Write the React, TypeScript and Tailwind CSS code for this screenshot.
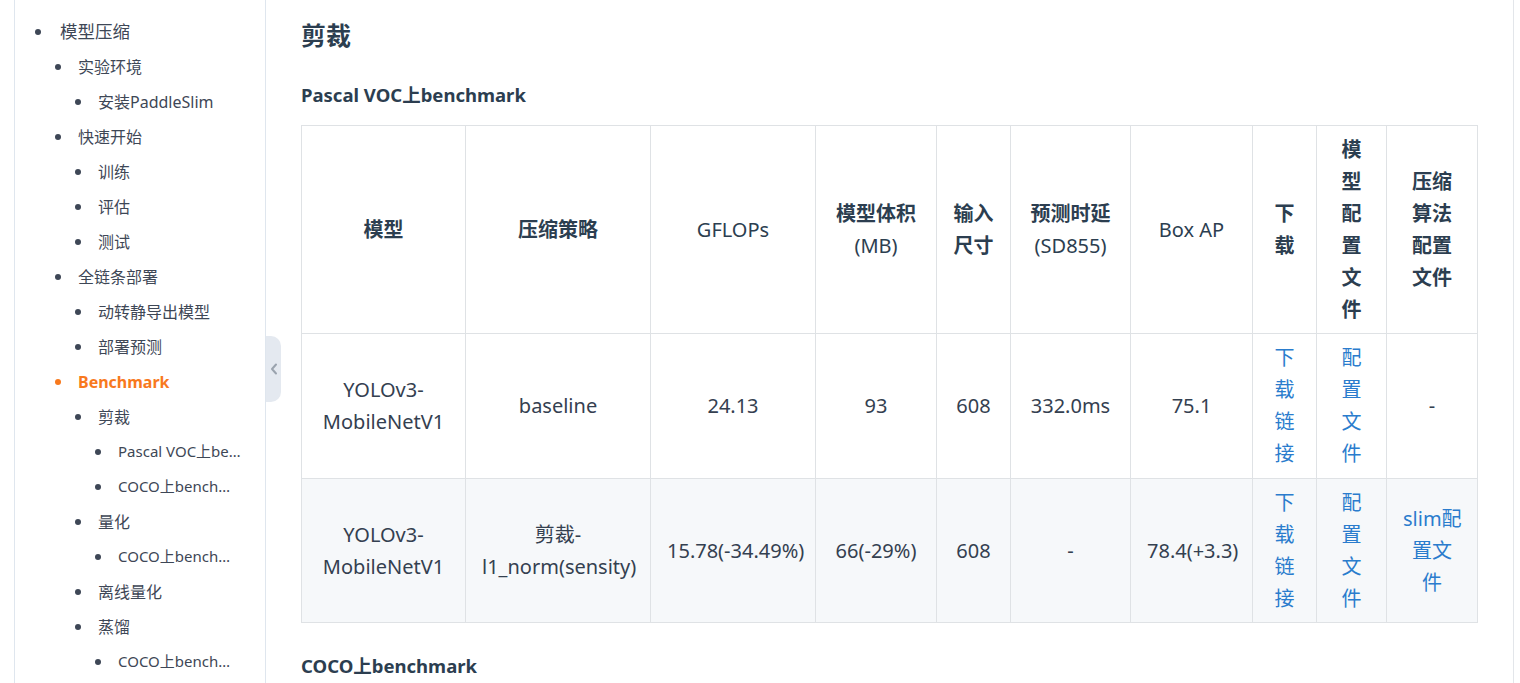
import React from "react";

type Item = { level: number; text: string; active?: boolean };

const items: Item[] = [
  { level: 1, text: "模型压缩" },
  { level: 2, text: "实验环境" },
  { level: 3, text: "安装PaddleSlim" },
  { level: 2, text: "快速开始" },
  { level: 3, text: "训练" },
  { level: 3, text: "评估" },
  { level: 3, text: "测试" },
  { level: 2, text: "全链条部署" },
  { level: 3, text: "动转静导出模型" },
  { level: 3, text: "部署预测" },
  { level: 2, text: "Benchmark", active: true },
  { level: 3, text: "剪裁" },
  { level: 4, text: "Pascal VOC上benchmark" },
  { level: 4, text: "COCO上benchmark" },
  { level: 3, text: "量化" },
  { level: 4, text: "COCO上benchmark" },
  { level: 3, text: "离线量化" },
  { level: 3, text: "蒸馏" },
  { level: 4, text: "COCO上benchmark" },
];

const FONT = { fontFamily: '"Noto Sans", "Noto Sans CJK SC", sans-serif' };

function SideItem({ item }: { item: Item }) {
  const pad =
    item.level === 1
      ? "pl-[20px]"
      : item.level === 2
      ? "pl-[40px]"
      : item.level === 3
      ? "pl-[60px]"
      : "pl-[80px]";
  const size =
    item.level === 1 ? "text-[17.5px] ml-[19px]" : item.level === 4 ? "text-[15px] ml-[17px]" : "text-[16px] ml-[17px]";
  const color = item.active ? "text-[#f8791d] font-bold" : "text-[#3e4756]";
  const dot = item.active ? "bg-[#f8791d]" : "bg-[#3e4756]";
  return (
    <div className={`flex items-center h-[35px] ${pad} pr-[22px]`}>
      <span className={`w-[6px] h-[6px] rounded-full shrink-0 ${dot}`} />
      <span className={`truncate ${size} ${color}`}>{item.text}</span>
    </div>
  );
}

type Cell = { text: React.ReactNode; link?: boolean; nowrap?: boolean };

const rows: Cell[][] = [
  [
    { text: "YOLOv3-MobileNetV1" },
    { text: "baseline" },
    { text: "24.13", nowrap: true },
    { text: "93", nowrap: true },
    { text: "608", nowrap: true },
    { text: "332.0ms", nowrap: true },
    { text: "75.1", nowrap: true },
    { text: "下载链接", link: true },
    { text: "配置文件", link: true },
    { text: "-" },
  ],
  [
    { text: "YOLOv3-MobileNetV1" },
    { text: "剪裁-l1_norm(sensity)" },
    { text: "15.78(-34.49%)", nowrap: true },
    { text: "66(-29%)", nowrap: true },
    { text: "608", nowrap: true },
    { text: "-" },
    { text: "78.4(+3.3)", nowrap: true },
    { text: "下载链接", link: true },
    { text: "配置文件", link: true },
    {
      text: (
        <>
          slim配
          <br />
          置文
          <br />件
        </>
      ),
      link: true,
      nowrap: true,
    },
  ],
];

const headers: React.ReactNode[] = [
  "模型",
  "压缩策略",
  <span className="font-normal">GFLOPs</span>,
  <>
    模型体积
    <br />
    <span className="font-normal">(MB)</span>
  </>,
  "输入尺寸",
  <>
    预测时延
    <br />
    <span className="font-normal">(SD855)</span>
  </>,
  <span className="font-normal">Box AP</span>,
  "下载",
  "模型配置文件",
  "压缩算法配置文件",
];

const widths = [164, 185, 165, 121, 74, 120, 122, 64, 70, 91];

export default function App() {
  return (
    <div className="w-[1520px] h-[683px] overflow-hidden bg-white flex" style={FONT}>
      <div className="w-[14px] shrink-0" />
      <aside className="w-[252px] shrink-0 border-l border-r border-[#dfe6ee] pt-[14px] relative">
        {items.map((it, i) => (
          <SideItem key={i} item={it} />
        ))}
        <div className="absolute left-[251px] top-[336px] w-[15px] h-[66px] bg-[#e4e9f0] rounded-r-[10px] flex items-center justify-center">
          <svg width="8" height="12" viewBox="0 0 8 12">
            <path d="M6 1.5 L2 6 L6 10.5" fill="none" stroke="#9aa3ae" strokeWidth="2" strokeLinecap="round" strokeLinejoin="round" />
          </svg>
        </div>
      </aside>
      <main className="w-[1248px] shrink-0 border-r border-[#e3e6ea] pl-[35px] pt-[19px]">
        <h2 className="text-[25px] leading-[32px] font-bold text-[#2c3e50]">剪裁</h2>
        <h3 className="mt-[30px] text-[18.5px] leading-[28px] font-bold text-[#2c3e50]">Pascal VOC上benchmark</h3>
        <table className="mt-[16px] table-fixed border-collapse w-[1176px] text-[20px] leading-[32px] text-[#344050]">
          <colgroup>
            {widths.map((w, i) => (
              <col key={i} style={{ width: w }} />
            ))}
          </colgroup>
          <thead>
            <tr>
              {headers.map((h, i) => (
                <th key={i} className="border border-[#dfe2e5] px-[16px] py-[7.5px] font-bold text-center align-middle text-[#2c3e50]">
                  {h}
                </th>
              ))}
            </tr>
          </thead>
          <tbody>
            {rows.map((r, ri) => (
              <tr key={ri} className={ri === 1 ? "bg-[#f6f8fa]" : "bg-white"}>
                {r.map((c, ci) => (
                  <td
                    key={ci}
                    className={`border border-[#dfe2e5] px-[16px] ${ri === 1 ? "py-[7.5px]" : "py-[8px]"} text-center align-middle ${
                      c.nowrap ? "whitespace-nowrap" : ""
                    } ${c.link ? "text-[#2a7ccd]" : ""}`}
                  >
                    {c.text}
                  </td>
                ))}
              </tr>
            ))}
          </tbody>
        </table>
        <h3 className="mt-[29px] text-[18.5px] leading-[28px] font-bold text-[#2c3e50]">COCO上benchmark</h3>
      </main>
    </div>
  );
}
